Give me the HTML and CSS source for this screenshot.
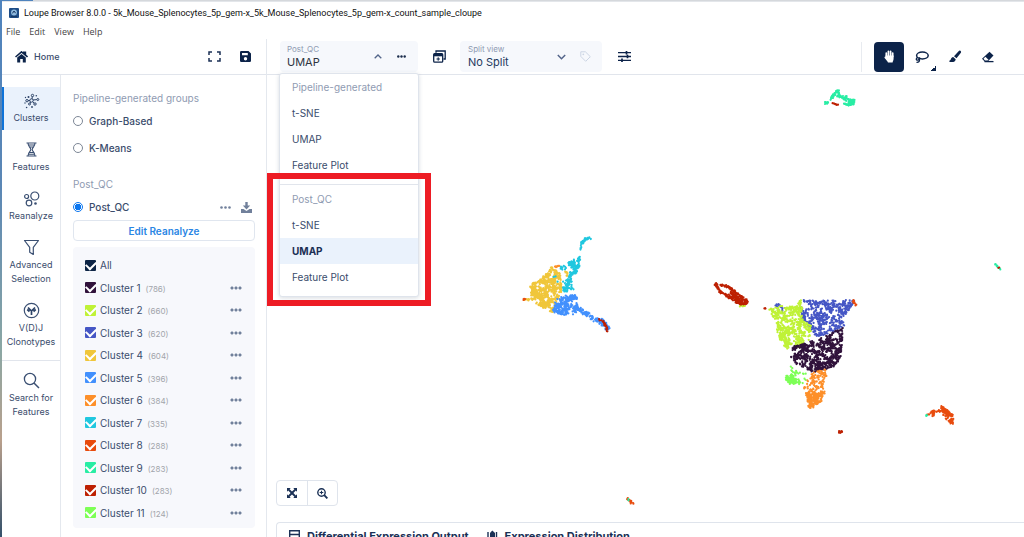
FILE: index.html
```html
<!DOCTYPE html>
<html lang="en">
<head>
<meta charset="utf-8">
<title>Loupe Browser 8.0.0</title>
<link rel="stylesheet" href="styles.css">
</head>
<body>
<div class="window">
  <header class="titlebar">
    <svg class="app-icon" viewBox="0 0 10 10"><rect width="10" height="10" rx="1" fill="#1d4c86"/><circle cx="5" cy="4.6" r="3" fill="#8db8dd"/><path d="M3.4 5.4 5 3l1.6 2.2M2 8.6h6" stroke="#16355f" fill="none"/></svg>
    <span>Loupe Browser 8.0.0 - 5k_Mouse_Splenocytes_5p_gem-x_5k_Mouse_Splenocytes_5p_gem-x_count_sample_cloupe</span>
  </header>
  <nav class="menubar" aria-label="Application menu">
    <button type="button">File</button><button type="button">Edit</button><button type="button">View</button><button type="button">Help</button>
  </nav>
  <div class="app">
    <section class="side">
      <div class="side-head">
        <a class="home" href="#home">
          <svg width="13" height="12" viewBox="0 0 13 12"><path d="M.5 6 6.5.9 8.8 2.8V1.2h1.6v3L12.5 6" fill="none" stroke="#0c2349" stroke-width="1.6"/><path d="M2.2 6.6 6.5 3l4.3 3.6V11.500H7.800V8H5.200v3.500H2.200z" fill="#0c2349"/></svg>
          <span>Home</span>
        </a>
        <button type="button" class="plain" aria-label="Full screen"><svg width="13" height="11" viewBox="0 0 13 11"><path d="M4 1H1v3M9 1h3v3M4 10H1V7M9 10h3V7" fill="none" stroke="#1b3156" stroke-width="1.500"/></svg></button>
        <button type="button" class="plain" aria-label="Save"><svg width="11" height="11" viewBox="0 0 11 11"><path fill-rule="evenodd" d="M1.200 0H8.500L11 2.500V9.800A1.200 1.200 0 0 1 9.800 11H1.200A1.200 1.200 0 0 1 0 9.800V1.200A1.200 1.200 0 0 1 1.200 0zM2 2v2.200h5.800V2zM5.500 6a1.700 1.700 0 1 0 0 3.400 1.700 1.700 0 0 0 0-3.400z" fill="#0c2349"/></svg></button>
      </div>
      <div class="side-body">
        <nav class="rail" aria-label="Modes">
          <a class="rail-item active" href="#clusters">
            <svg class="rail-icon" viewBox="0 0 17 17"><g fill="none" stroke="#2c4368"><circle cx="8.500" cy="8.500" r="1.700"/><circle cx="9.500" cy="3.500" r="1.200"/><circle cx="4" cy="8.700" r="1.200"/><circle cx="12" cy="12" r="1.200"/><circle cx="6.500" cy="12" r="1"/><circle cx="14.800" cy="7.500" r="1"/><path d="m9 7 .3-2.500M7 8.600H5M9.700 9.700l1.300 1.400M7.600 10l-.6 1.200M10 8l3.800-.4"/></g><g fill="#2c4368"><circle cx="5.500" cy="5" r="1"/><circle cx="2.500" cy="5.500" r=".7"/><circle cx="13.300" cy="3.700" r=".8"/><circle cx="9" cy="15" r=".9"/><circle cx="3.600" cy="15.500" r=".8"/><circle cx="2" cy="11" r=".7"/></g></svg>
            <span>Clusters</span></a>
          <a class="rail-item" href="#features">
            <svg class="rail-icon" viewBox="0 0 17 17"><g fill="none" stroke="#3a4f72" stroke-width="1.100"><path d="M3.500 2h10M3.500 15h10M5 2c0 4 2.800 4.300 2.800 6.500S5 11 5 15M12 2c0 4-2.800 4.300-2.800 6.500S12 11 12 15M5.500 4h6M6.500 6h4M6.500 11.500h4M5.500 13.300h6"/></g></svg>
            <span>Features</span></a>
          <a class="rail-item" href="#reanalyze">
            <svg class="rail-icon" viewBox="0 0 17 17"><g fill="none" stroke="#3a4f72" stroke-width="1.200"><circle cx="11.800" cy="6" r="4"/><circle cx="3.600" cy="6.500" r="2"/><circle cx="6" cy="13" r="2.800"/></g><circle cx="12.500" cy="13.500" r="1.300" fill="#3a4f72"/></svg>
            <span>Reanalyze</span></a>
          <a class="rail-item" href="#advanced">
            <svg class="rail-icon" viewBox="0 0 17 17"><path d="M1.500 1.500h14l-5.200 6.800v7.200l-3.600-2.200v-5z" fill="none" stroke="#3a4f72" stroke-width="1.200" stroke-linejoin="round"/></svg>
            <span>Advanced Selection</span></a>
          <a class="rail-item" href="#vdj">
            <svg class="rail-icon" viewBox="0 0 17 17"><circle cx="8.500" cy="8.500" r="7.200" fill="none" stroke="#3a4f72" stroke-width="1.200"/><path d="M8.500 13V9L5 5.500M8.500 9 12 5.500M4.300 7.500 6.500 9.500M12.700 7.500l-2.200 2" fill="none" stroke="#2c4368" stroke-width="1.700"/></svg>
            <span>V(D)J Clonotypes</span></a>
          <a class="rail-item search" href="#search">
            <svg class="rail-icon" viewBox="0 0 17 17"><circle cx="7" cy="7" r="5.600" fill="none" stroke="#3a4f72" stroke-width="1.300"/><path d="m11 11 5 5" stroke="#3a4f72" stroke-width="1.500"/></svg>
            <span>Search for Features</span></a>
        </nav>
        <div class="groups">
          <h2>Pipeline-generated groups</h2>
          <label class="radio"><input type="radio" name="group"><span>Graph-Based</span></label>
          <label class="radio"><input type="radio" name="group"><span>K-Means</span></label>
          <h2 class="second">Post_QC</h2>
          <div class="radio-row">
            <label class="radio"><input type="radio" name="group" checked><span>Post_QC</span></label>
            <button type="button" class="plain more" aria-label="Group options"><svg width="11" height="3" viewBox="0 0 11 3"><g fill="#71809b"><circle cx="1.500" cy="1.500" r="1.300"/><circle cx="5.500" cy="1.500" r="1.300"/><circle cx="9.500" cy="1.500" r="1.300"/></g></svg></button>
            <button type="button" class="plain" aria-label="Download"><svg width="11" height="11" viewBox="0 0 11 11"><path d="M4.300 0h2.400v3.600h2.500L5.500 7.500 1.800 3.600h2.500zM0 7h2.500l3 2 3-2H11v4H0z" fill="#71809b"/></svg></button>
          </div>
          <button type="button" class="edit">Edit Reanalyze</button>
          <ul class="clusters">
            <li><label><input type="checkbox" class="box all" checked><span>All</span></label></li>
            <li><label><input type="checkbox" class="box c1" checked><span>Cluster 1</span><small>(786)</small></label><button type="button" class="dots" aria-label="Cluster 1 options"></button></li>
            <li><label><input type="checkbox" class="box c2" checked><span>Cluster 2</span><small>(660)</small></label><button type="button" class="dots" aria-label="Cluster 2 options"></button></li>
            <li><label><input type="checkbox" class="box c3" checked><span>Cluster 3</span><small>(620)</small></label><button type="button" class="dots" aria-label="Cluster 3 options"></button></li>
            <li><label><input type="checkbox" class="box c4" checked><span>Cluster 4</span><small>(604)</small></label><button type="button" class="dots" aria-label="Cluster 4 options"></button></li>
            <li><label><input type="checkbox" class="box c5" checked><span>Cluster 5</span><small>(396)</small></label><button type="button" class="dots" aria-label="Cluster 5 options"></button></li>
            <li><label><input type="checkbox" class="box c6" checked><span>Cluster 6</span><small>(384)</small></label><button type="button" class="dots" aria-label="Cluster 6 options"></button></li>
            <li><label><input type="checkbox" class="box c7" checked><span>Cluster 7</span><small>(335)</small></label><button type="button" class="dots" aria-label="Cluster 7 options"></button></li>
            <li><label><input type="checkbox" class="box c8" checked><span>Cluster 8</span><small>(288)</small></label><button type="button" class="dots" aria-label="Cluster 8 options"></button></li>
            <li><label><input type="checkbox" class="box c9" checked><span>Cluster 9</span><small>(283)</small></label><button type="button" class="dots" aria-label="Cluster 9 options"></button></li>
            <li><label><input type="checkbox" class="box c10" checked><span>Cluster 10</span><small>(283)</small></label><button type="button" class="dots" aria-label="Cluster 10 options"></button></li>
            <li><label><input type="checkbox" class="box c11" checked><span>Cluster 11</span><small>(124)</small></label><button type="button" class="dots" aria-label="Cluster 11 options"></button></li>
          </ul>
        </div>
      </div>
    </section>

    <main class="main">
      <div class="toolbar">
        <div class="view-picker">
          <button type="button" class="view-button" aria-haspopup="listbox" aria-expanded="true">
            <span class="field"><span class="caption">Post_QC</span><span class="value dark">UMAP</span></span>
            <svg width="8" height="5" viewBox="0 0 8 5"><path d="M.7 4.300 4 1l3.300 3.300" fill="none" stroke="#53658a" stroke-width="1.300"/></svg>
          </button>
          <button type="button" class="plain" aria-label="View options"><svg width="9" height="3" viewBox="0 0 9 3"><g fill="#1b2c4c"><circle cx="1.300" cy="1.500" r="1.200"/><circle cx="4.500" cy="1.500" r="1.200"/><circle cx="7.700" cy="1.500" r="1.200"/></g></svg></button>
          <div class="menu">
            <ul role="listbox" aria-label="Pipeline-generated">
              <li class="menu-title" role="presentation">Pipeline-generated</li>
              <li role="option">t-SNE</li>
              <li role="option">UMAP</li>
              <li role="option">Feature Plot</li>
            </ul>
            <ul role="listbox" aria-label="Post_QC">
              <li class="menu-title" role="presentation">Post_QC</li>
              <li role="option">t-SNE</li>
              <li role="option" class="chosen" aria-selected="true">UMAP</li>
              <li role="option">Feature Plot</li>
            </ul>
          </div>
          <div class="callout"></div>
        </div>
        <button type="button" class="plain add-window" aria-label="New linked window"><svg width="13" height="13" viewBox="0 0 13 13"><path d="M3 2.800V1h9.200v8H10.500" fill="none" stroke="#0c2349" stroke-width="1.300"/><rect x=".7" y="3.700" width="9" height="8.500" rx="1" fill="#fff" stroke="#0c2349" stroke-width="1.300"/><path d="M.7 3.700h9v2.600h-9z" fill="#0c2349"/><path d="M5.200 7.300v3.400M3.500 9h3.400" stroke="#0c2349"/></svg></button>
        <div class="split">
          <div class="field">
            <label class="caption" for="split">Split view</label>
            <select id="split" class="value"><option>No Split</option></select>
          </div>
          <svg width="9" height="6" viewBox="0 0 9 6"><path d="m.8 1 3.700 3.700L8.200 1" fill="none" stroke="#53658a" stroke-width="1.500"/></svg>
          <svg class="tag" width="11" height="11" viewBox="0 0 11 11"><path d="M.8.8h4.600l4.900 4.900-4.600 4.600L.8 5.400z" fill="none" stroke="#ccd5e4" stroke-linejoin="round"/><circle cx="3.300" cy="3.300" r=".9" fill="#ccd5e4"/></svg>
        </div>
        <button type="button" class="plain settings" aria-label="Display settings"><svg width="13" height="11" viewBox="0 0 13 11"><path d="M0 1.700h13M0 5.500h13M0 9.300h13" stroke="#0c2349" stroke-width="1.300"/><path d="M8.500 0v3.400M9.500 3.800v3.400M4 7.600V11" stroke="#0c2349" stroke-width="1.700"/></svg></button>
        <div class="tools">
          <button type="button" class="tool on" aria-label="Pan"><svg width="11" height="13" viewBox="0 0 11 13"><path d="M2.300 7V3M4.400 6V1.300M6.600 6V1.300M8.700 6.500V3" stroke="#fff" stroke-width="1.700" stroke-linecap="round"/><path d="M1.500 5.500h8.100V8.500c0 2-.8 2.500-1 4H4c-.4-1.500-2-2.600-3.400-4.600C.2 7.200.9 6.600 1.500 7z" fill="#fff"/></svg></button>
          <button type="button" class="tool lasso" aria-label="Lasso"><svg width="14" height="12" viewBox="0 0 14 12"><ellipse cx="7.400" cy="4.500" rx="5.800" ry="3.500" fill="none" stroke="#0c2349" stroke-width="1.500"/><path d="M2.500 6.500C0 8.500 2 9.700 3.500 8.700S5.500 6.500 3.500 7M4.500 8.700c.2 1.600-1 2.800-3 2.600" fill="none" stroke="#0c2349" stroke-width="1.300"/></svg></button>
          <button type="button" class="tool" aria-label="Brush"><svg width="13" height="13" viewBox="0 0 13 13"><path d="M11.300.7c1 .5 1 1.400.4 2.300L7.500 8.300 5 6.200 9.600 1.200c.6-.6 1.200-.8 1.700-.5zM4.200 7l2.500 2.200c-.2 2.300-2.300 3.300-6 2.700-.6-.5-.4-1.200 0-1.400C2.200 10.500 1.500 7.500 4.200 7z" fill="#0c2349"/></svg></button>
          <button type="button" class="tool" aria-label="Eraser"><svg width="14" height="12" viewBox="0 0 14 12"><path d="m8.500.8 4 3.800L6.800 10.400H3.600L1 7.800z" fill="#0c2349"/><path d="m4.400 5.800 3.100 2.900-1 .8H4L2.500 7.800z" fill="#fff"/><path d="M3.500 10.600h9" stroke="#0c2349" stroke-width="1.300"/></svg></button>
        </div>
      </div>
      <div class="canvas">
        <svg id="plot" class="plot" viewBox="0 0 757 447" preserveAspectRatio="xMidYMin meet" role="img" aria-label="UMAP projection"></svg>
        <div class="zoomers">
          <button type="button" aria-label="Fit to view"><svg width="10" height="10" viewBox="0 0 10 10"><path d="M0 0h3.700L2.600 1.200 5 3.600l2.400-2.400L6.300 0H10v3.700L8.800 2.600 6.400 5l2.400 2.400L10 6.300V10H6.300l1.100-1.200L5 6.400 2.600 8.800 3.700 10H0V6.300l1.200 1.100L3.600 5 1.200 2.600 0 3.700z" fill="#1b3156"/></svg></button>
          <button type="button" aria-label="Zoom in"><svg width="11" height="11" viewBox="0 0 11 11"><circle cx="4.500" cy="4.500" r="3.700" fill="none" stroke="#1b3156" stroke-width="1.400"/><path d="m7.200 7.200 3.200 3.200" stroke="#1b3156" stroke-width="1.900"/><path d="M4.500 2.700v3.600M2.700 4.500h3.600" stroke="#1b3156" stroke-width="1.100"/></svg></button>
        </div>
      </div>
      <div class="dock">
        <button type="button"><svg width="11" height="12" viewBox="0 0 11 12"><path d="M.7.700h9.600v10.600H.7zM.7 4.500h9.600M.7 8h9.600" fill="none" stroke="#1b3156" stroke-width="1.400"/></svg>Differential Expression Output</button>
        <button type="button"><svg width="11" height="12" viewBox="0 0 11 12"><path d="M1 2v8M9.500 2v8" stroke="#1b3156" stroke-width="1.400"/><path d="M5.300.500 8 3v6l-2.700 2.500L3 9V3z" fill="#1b3156"/></svg>Expression Distribution</button>
      </div>
    </main>
  </div>
</div>
<script src="plot.js"></script>
</body>
</html>
```

FILE: styles.css
```css
* { box-sizing: border-box; }
body {
  margin: 0;
  height: 100vh;
  overflow: hidden;
  padding: 1px 0 0 2px;
  background:
    linear-gradient(90deg, #4f83bd 33px, #d5d8dc 33px) top / 100% 1px no-repeat,
    linear-gradient(#4f83bd 0%, #5b87b5 35%, #8ba7a4 65%, #b9a08c 82%, #34506a 100%);
  font-family: Inter, "Liberation Sans", sans-serif;
  font-size: 10px;
  color: #3a4c6c;
}
button, input, select { font: inherit; color: inherit; margin: 0; }
button { cursor: pointer; }
svg { display: block; flex: none; }
ul { list-style: none; margin: 0; padding: 0; }
a { color: inherit; text-decoration: none; }
.plain { border: 0; padding: 0; background: none; }

.window { height: 100%; display: flex; flex-direction: column; background: #fff; }
.titlebar {
  display: flex; align-items: center; gap: 5px;
  height: 23px; padding-left: 7px;
  border-top: 1px solid #e3e6ea;
  font: 9px Roboto, "Noto Sans", sans-serif; color: #111;
  white-space: nowrap;
}
.app-icon { width: 10px; height: 10px; }
.menubar { display: flex; gap: 9px; height: 15px; padding-left: 4px; }
.menubar button {
  border: 0; padding: 0; background: none;
  font: 9px/15px "Open Sans", "Noto Sans", sans-serif; color: #444;
}

.app { flex: 1; min-height: 0; display: flex; }
.side { flex: none; width: 265px; display: flex; flex-direction: column; border-right: 1px solid #e4e8ee; }
.side-head {
  flex: none; display: flex; align-items: center; gap: 19px;
  height: 36px; padding: 0 15px 0 13px;
  border-bottom: 1px solid #e1e5ec;
}
.home { display: flex; align-items: center; gap: 6px; margin-right: auto; font-size: 9px; font-weight: 500; }
.side-body { flex: 1; min-height: 0; display: flex; }

.rail {
  flex: none; width: 59px; padding-top: 12px;
  display: flex; flex-direction: column; gap: 6px;
  border-right: 1px solid #e4e8ee;
}
.rail-item {
  display: flex; flex-direction: column; align-items: center; gap: 2px;
  padding: 5px 6px; text-align: center;
  font-size: 9px; line-height: 14px;
}
.rail-icon { width: 17px; height: 17px; }
.rail-item.active { background: #eaf2fc; box-shadow: inset 2px 0 #0f73d8; }
.rail-item.search { border-top: 1px solid #e1e5ec; padding-top: 11px; }

.groups { flex: 1; min-width: 0; display: flex; flex-direction: column; padding: 16px 11px 9px 12px; }
h2 { margin: 0; font-size: 10px; line-height: 14px; font-weight: 400; color: #8f9bb2; white-space: nowrap; }
h2.second { margin-top: 21px; }
.radio { display: flex; align-items: center; gap: 6px; margin-top: 11px; line-height: 16px; font-weight: 500; }
h2 + .radio { margin-top: 8px; }
.radio input {
  appearance: none; width: 10px; height: 10px;
  border: 1px solid #7d8796; border-radius: 50%;
}
.radio input:checked { border-color: #0b76ef; background: radial-gradient(circle, #0b76ef 0 3px, #fff 3px); }
.radio-row { display: flex; align-items: center; padding: 8px 3px 5px 0; }
.radio-row .radio { margin: 0 auto 0 0; }
.radio-row .more { margin-right: 10px; }
.edit {
  flex: none; height: 21px; padding: 0; margin-bottom: 6px;
  border: 1px solid #e0e6ef; border-radius: 4px; background: #fff;
  color: #2a86e4; font-weight: 600;
}
.clusters {
  flex: 1; min-height: 0; display: flex; flex-direction: column;
  padding: 7px 12px 4px; border-radius: 4px; background: #f7f8fc;
}
.clusters li { flex: 1; display: flex; align-items: center; justify-content: space-between; }
.clusters label { display: flex; align-items: center; gap: 4px; }
.clusters small { font-size: 8px; padding: 2px 0 0 1px; color: #a2a5ab; }
.box {
  appearance: none; width: 11px; height: 11px; border-radius: 1px;
  display: grid; place-items: center;
}
.box:checked::after {
  content: ""; width: 8px; height: 5px;
  border: solid #fff; border-width: 0 0 2px 2px;
  transform: translateY(-1px) rotate(-45deg);
}
.all { background: #0d2445; }
.c1 { background: #30123b; }
.c2 { background: #bff236; }
.c3 { background: #4556c5; }
.c4 { background: #f0c63a; }
.c5 { background: #4290fd; }
.c6 { background: #fd8f29; }
.c7 { background: #20c7df; }
.c8 { background: #e84b0d; }
.c9 { background: #28eda4; }
.c10 { background: #bd2002; }
.c11 { background: #7dff56; }
.dots {
  width: 12px; height: 4px; padding: 0; border: 0; margin-right: 1px;
  background: radial-gradient(circle, #71809b 0 1px, transparent 2px) 0 0 / 4px 4px;
}

.main { flex: 1; min-width: 0; display: flex; flex-direction: column; }
.toolbar {
  flex: none; display: flex; align-items: center;
  height: 36px; padding: 2px 21px 2px 13px;
  border-bottom: 1px solid #e1e5ec;
}
.view-picker, .split {
  display: flex; align-items: center; height: 31px;
  border-radius: 4px; background: #f6f8fc;
}
.view-picker { position: relative; width: 138px; padding-right: 12px; gap: 15px; }
.view-button {
  flex: 1; display: flex; align-items: center; justify-content: space-between;
  padding: 0 0 0 7px; border: 0; background: none; text-align: left;
}
.field { display: flex; flex-direction: column; }
.caption { font-size: 8px; line-height: 11px; color: #8f9bb2; }
.value { font-size: 11px; line-height: 14px; color: #24395e; }
.value.dark { color: #2d3440; }
.menu {
  position: absolute; z-index: 2; top: 32px; left: -1px; width: 140px;
  border: 1px solid #dfe4ec; border-radius: 3px; background: #fff;
  box-shadow: 0 1px 4px rgba(40, 60, 90, .18);
}
.menu ul { padding-bottom: 6px; }
.menu ul + ul { padding-top: 1px; border-top: 1px solid #e1e5ec; }
.menu li { padding-left: 12px; line-height: 26px; }
.menu .menu-title { color: #8f9bb2; }
.menu .chosen { background: #eaf2fc; font-weight: 700; color: #1b2f54; }
.callout {
  position: absolute; z-index: 3; top: 132px; left: -13px; width: 164px; height: 133px;
  border: 6px solid #ed1c24; pointer-events: none;
}
.add-window { margin: 0 14px 0 15px; }
.split { width: 142px; padding: 0 11px 0 8px; }
.split .field { flex: 1; }
.split select { appearance: none; border: 0; padding: 0; background: none; }
.tag { margin-left: 14px; }
.settings { margin-left: 16px; }
.tools {
  display: flex; align-items: center; gap: 3px;
  margin-left: auto; padding-left: 12px; border-left: 1px solid #e8ebf0;
}
.tool {
  display: grid; place-items: center; width: 30px; height: 30px; padding: 0;
  border: 0; border-radius: 4px; background: none;
}
.tool.on { background: #0c2349; }
.lasso { background: linear-gradient(135deg, transparent 50%, #0c2349 50%) right 1px bottom 1px / 5px 5px no-repeat; }

.canvas { flex: 1; min-height: 0; position: relative; display: flex; align-items: flex-end; padding: 0 0 16px 9px; }
.plot { position: absolute; inset: 0; width: 100%; height: 100%; }
.zoomers { position: relative; display: flex; border: 1px solid #dfe4ec; border-radius: 4px; background: #fff; }
.zoomers button { display: grid; place-items: center; width: 30px; height: 24px; padding: 0; border: 0; background: none; }
.zoomers button + button { border-left: 1px solid #dfe4ec; }
.dock {
  flex: none; display: flex; align-items: flex-start; gap: 18px;
  height: 15px; margin-left: 9px; padding: 6px 0 0 12px; overflow: hidden;
  border: solid #dfe4ec; border-width: 1px 0 0 1px; border-top-left-radius: 4px;
}
.dock button {
  display: flex; align-items: center; gap: 7px; padding: 0;
  border: 0; background: none; font-size: 11px; line-height: 14px; font-weight: 700; color: #1b3156;
}
```

FILE: plot.js
```js
const COLORS = {
  1: "#30123b", 2: "#bff236", 3: "#4556c5", 4: "#f0c63a", 5: "#4290fd", 6: "#fd8f29",
  7: "#20c7df", 8: "#e84b0d", 9: "#28eda4", 10: "#bd2002", 11: "#7dff56"
};

// Regions are filled with n cells; paths scatter n cells along a line of the given spread.
const REGIONS = [
  { c: 3, n: 560, p: [[537,225],[558,226],[580,224],[588,226],[578,240],[577,255],[563,258],[549,262],[543,252],[536,246],[533,233]] },
  { c: 3, n: 16, p: [[506,229],[518,230],[519,238],[511,237]] },
  { c: 2, n: 580, p: [[500,235],[510,231],[525,231],[534,224],[536,244],[544,250],[543,264],[533,272],[521,276],[511,262],[509,245]] },
  { c: 1, n: 720, p: [[576,252],[574,282],[567,292],[546,297],[530,290],[524,282],[526,272],[543,266],[553,264],[566,257]] },
  { c: 1, n: 16, p: [[520,271],[560,256],[575,265],[570,293],[545,301]] },
  { c: 6, n: 150, p: [[542,300],[558,293],[560,303],[557,320],[541,324],[536,312]] },
  { c: 6, n: 230, p: [[540,316],[557,318],[555,326],[548,332],[541,333]] },
  { c: 11, n: 95, p: [[519,299],[530,301],[535,309],[523,309],[518,304]] },
  { c: 11, n: 22, p: [[523,291],[543,297],[537,309],[525,304]] },
  { c: 4, n: 580, p: [[261,210],[273,205],[285,192],[293,198],[295,213],[290,230],[286,238],[271,230],[263,223],[264,216]] },
  { c: 5, n: 270, p: [[290,220],[303,221],[310,217],[311,233],[308,239],[296,240],[286,237]] },
  { c: 7, n: 120, p: [[313,181],[313,194],[308,200],[303,203],[301,188],[308,184]] },
  { c: 7, n: 80, p: [[303,200],[307,215],[296,217],[296,210]] },
  { c: 8, n: 130, p: [[674,331],[686,339],[686,350],[678,344],[675,337]] }
];
const PATHS = [
  { c: 4, n: 12, w: 2, p: [[257,225],[266,224]] },
  { c: 5, n: 90, w: 4, p: [[309,232],[320,239],[332,247]] },
  { c: 5, n: 60, w: 6, p: [[332,246],[336,248],[340,254]] },
  { c: 10, n: 20, w: 2, p: [[336,246],[338,250],[341,256]] },
  { c: 10, n: 4, w: 2, p: [[332,244],[334,245]] },
  { c: 7, n: 50, w: 2, p: [[324,163],[318,164],[315,168],[314,174]] },
  { c: 7, n: 12, w: 4, p: [[294,192],[300,194]] },
  { c: 7, n: 8, w: 12, p: [[286,203],[300,212]] },
  { c: 6, n: 12, w: 1, p: [[288,192],[292,191]] },
  { c: 4, n: 9, w: 2, p: [[299,197],[301,202]] },
  { c: 8, n: 6, w: 1, p: [[256,225],[258,224]] },
  { c: 10, n: 200, w: 2, p: [[448,209],[460,211],[472,220],[481,227],[475,230],[465,224],[453,217],[449,209]] },
  { c: 10, n: 80, w: 6, p: [[464,219],[477,228]] },
  { c: 10, n: 5, w: 1, p: [[497,233],[499,234]] },
  { c: 8, n: 9, w: 2, p: [[586,225],[589,231]] },
  { c: 2, n: 4, w: 1, p: [[472,231],[479,231]] },
  { c: 9, n: 70, w: 2, p: [[563,25],[568,19],[571,15],[573,22],[579,22],[583,27],[587,27]] },
  { c: 9, n: 30, w: 2, p: [[563,25],[567,20],[573,21],[579,25]] },
  { c: 9, n: 60, w: 4, p: [[583,27],[586,26]] },
  { c: 9, n: 30, w: 2, p: [[587,28],[583,30],[577,29]] },
  { c: 9, n: 12, w: 2, p: [[558,28],[561,28]] },
  { c: 10, n: 10, w: 1, p: [[565,28],[571,30]] },
  { c: 9, n: 14, w: 1, p: [[728,189],[733,194]] },
  { c: 10, n: 2, w: 1, p: [[731,192],[732,193]] },
  { c: 8, n: 25, w: 2, p: [[661,339],[667,336],[666,341]] },
  { c: 8, n: 12, w: 2, p: [[669,336],[674,336]] },
  { c: 9, n: 5, w: 1, p: [[658,341],[660,340]] },
  { c: 8, n: 20, w: 2, p: [[360,423],[366,429]] },
  { c: 9, n: 2, w: 1, p: [[361,424],[362,425]] },
  { c: 10, n: 8, w: 2, p: [[572,357],[575,357]] }
];

let seed = 20240;
function random() {
  seed = (seed * 1664525 + 1013904223) % 4294967296;
  return seed / 4294967296;
}

function inside(x, y, poly) {
  let hit = false;
  for (let i = 0, j = poly.length - 1; i < poly.length; j = i++) {
    const [xi, yi] = poly[i], [xj, yj] = poly[j];
    if ((yi > y) !== (yj > y) && x < (xj - xi) * (y - yi) / (yj - yi) + xi) hit = !hit;
  }
  return hit;
}

function fillRegion(region) {
  const xs = region.p.map(q => q[0]), ys = region.p.map(q => q[1]);
  const x0 = Math.min(...xs), x1 = Math.max(...xs), y0 = Math.min(...ys), y1 = Math.max(...ys);
  const pick = () => [x0 + random() * (x1 - x0), y0 + random() * (y1 - y0)];
  // Sparse pockets keep the fill clumpy.
  const pockets = Array.from({ length: Math.round((x1 - x0) * (y1 - y0) / 38) }, pick);
  const cells = [];
  while (cells.length < region.n) {
    const [x, y] = pick();
    if (!inside(x, y, region.p)) continue;
    const sparse = pockets.some(([px, py]) => Math.hypot(px - x, py - y) < 2.2);
    if (sparse && random() < 0.9) continue;
    cells.push([x + random() - 0.5, y + random() - 0.5]);
  }
  return cells;
}

function followPath(path) {
  const cells = [];
  for (let i = 0; i < path.n; i++) {
    const t = random() * (path.p.length - 1), k = Math.floor(t), f = t - k;
    const [ax, ay] = path.p[k], [bx, by] = path.p[k + 1];
    cells.push([ax + (bx - ax) * f + (random() - 0.5) * path.w, ay + (by - ay) * f + (random() - 0.5) * path.w]);
  }
  return cells;
}

function draw(cells, color) {
  const el = document.createElementNS("http://www.w3.org/2000/svg", "path");
  el.setAttribute("d", cells.map(([x, y]) => `M${x.toFixed(1)} ${y.toFixed(1)}h0`).join(""));
  el.setAttribute("stroke", color);
  el.setAttribute("stroke-width", "2.2");
  el.setAttribute("stroke-linecap", "round");
  document.getElementById("plot").append(el);
}

REGIONS.forEach(r => draw(fillRegion(r), COLORS[r.c]));
PATHS.forEach(p => draw(followPath(p), COLORS[p.c]));
```
